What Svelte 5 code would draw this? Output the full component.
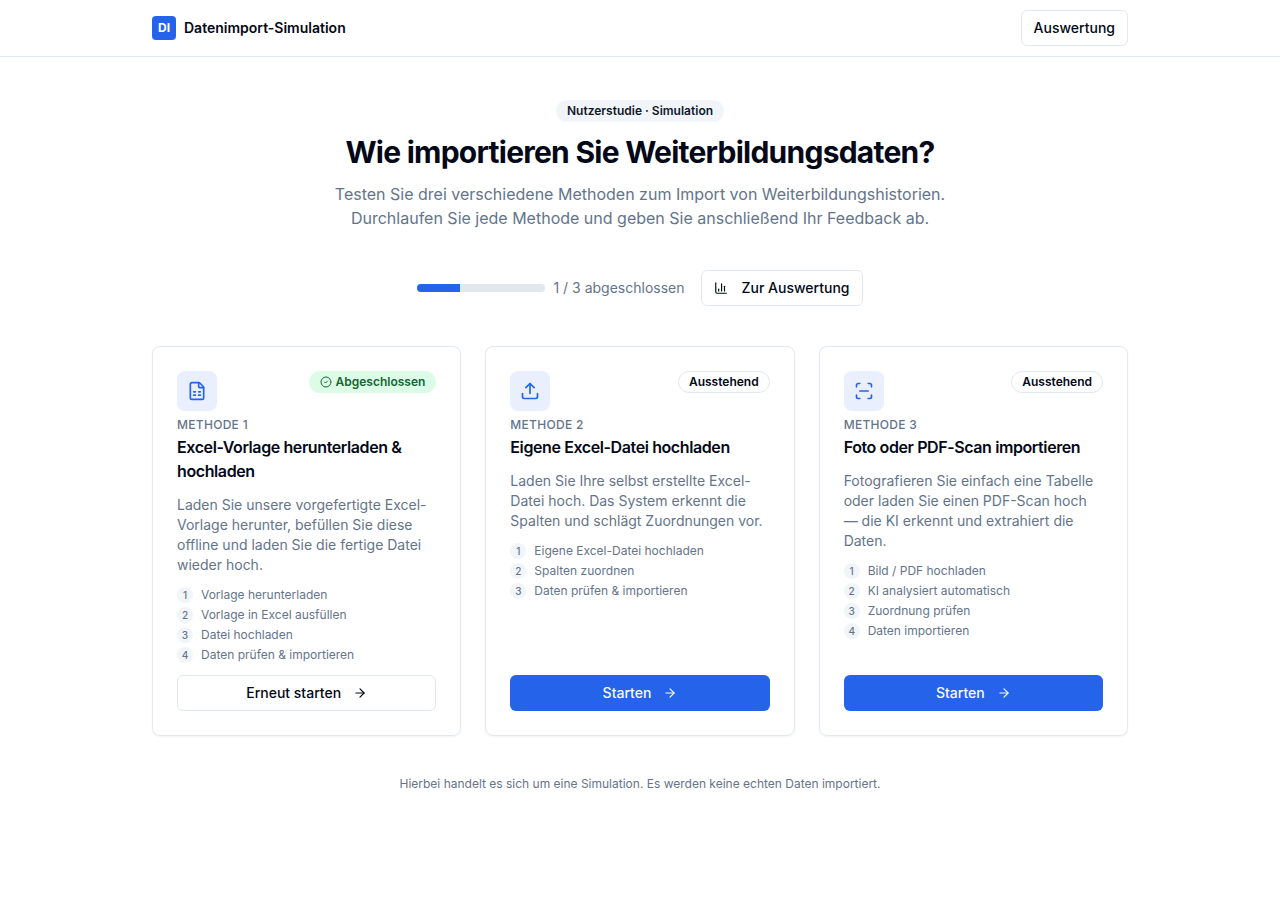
<script>
  const methods = [
    {
      id: 1,
      title: 'Excel-Vorlage herunterladen & hochladen',
      description:
        'Laden Sie unsere vorgefertigte Excel-Vorlage herunter, befüllen Sie diese offline und laden Sie die fertige Datei wieder hoch.',
      steps: ['Vorlage herunterladen', 'Vorlage in Excel ausfüllen', 'Datei hochladen', 'Daten prüfen & importieren'],
      icon: [
        'M6 22a2 2 0 0 1-2-2V4a2 2 0 0 1 2-2h8a2.4 2.4 0 0 1 1.704.706l3.588 3.588A2.4 2.4 0 0 1 20 8v12a2 2 0 0 1-2 2z',
        'M14 2v5a1 1 0 0 0 1 1h5',
        'M8 13h2',
        'M14 13h2',
        'M8 17h2',
        'M14 17h2'
      ]
    },
    {
      id: 2,
      title: 'Eigene Excel-Datei hochladen',
      description:
        'Laden Sie Ihre selbst erstellte Excel-Datei hoch. Das System erkennt die Spalten und schlägt Zuordnungen vor.',
      steps: ['Eigene Excel-Datei hochladen', 'Spalten zuordnen', 'Daten prüfen & importieren'],
      icon: ['M12 3v12', 'm17 8-5-5-5 5', 'M21 15v4a2 2 0 0 1-2 2H5a2 2 0 0 1-2-2v-4']
    },
    {
      id: 3,
      title: 'Foto oder PDF-Scan importieren',
      description:
        'Fotografieren Sie einfach eine Tabelle oder laden Sie einen PDF-Scan hoch — die KI erkennt und extrahiert die Daten.',
      steps: ['Bild / PDF hochladen', 'KI analysiert automatisch', 'Zuordnung prüfen', 'Daten importieren'],
      icon: [
        'M3 7V5a2 2 0 0 1 2-2h2',
        'M17 3h2a2 2 0 0 1 2 2v2',
        'M21 17v2a2 2 0 0 1-2 2h-2',
        'M7 21H5a2 2 0 0 1-2-2v-2',
        'M7 12h10'
      ]
    }
  ];

  const chartIcon = ['M3 3v16a2 2 0 0 0 2 2h16', 'M18 17V9', 'M13 17V5', 'M8 17v-3'];
  const arrowIcon = ['M5 12h14', 'm12 5 7 7-7 7'];
  const checkIcon = ['M22 12a10 10 0 1 1-20 0a10 10 0 1 1 20 0', 'm9 12 2 2 4-4'];

  let completed = $state([1]);
  let progress = $derived((completed.length / methods.length) * 100);
</script>

{#snippet icon(paths, size)}
  <svg
    width={size}
    height={size}
    viewBox="0 0 24 24"
    fill="none"
    stroke="currentColor"
    stroke-width="2"
    stroke-linecap="round"
    stroke-linejoin="round"
    aria-hidden="true"
  >
    {#each paths as d}
      <path {d} />
    {/each}
  </svg>
{/snippet}

<div class="page">
  <header>
    <div class="container header-inner">
      <a class="brand" href="#start">
        <span class="logo">DI</span>
        <span>Datenimport-Simulation</span>
      </a>
      <a class="btn outline" href="#auswertung">Auswertung</a>
    </div>
  </header>

  <main class="container">
    <section class="hero">
      <span class="badge secondary">Nutzerstudie · Simulation</span>
      <h1>Wie importieren Sie Weiterbildungsdaten?</h1>
      <p>
        Testen Sie drei verschiedene Methoden zum Import von Weiterbildungshistorien. Durchlaufen Sie jede Methode und
        geben Sie anschließend Ihr Feedback ab.
      </p>
    </section>

    <section class="status">
      <div class="progress">
        <div
          class="track"
          role="progressbar"
          aria-label="Fortschritt"
          aria-valuemin="0"
          aria-valuemax={methods.length}
          aria-valuenow={completed.length}
        >
          <div class="bar" style="width: {progress}%"></div>
        </div>
        <span>{completed.length} / {methods.length} abgeschlossen</span>
      </div>
      <a class="btn outline with-chart" href="#auswertung">
        {@render icon(chartIcon, 14)}
        Zur Auswertung
      </a>
    </section>

    <section class="methods">
      {#each methods as method (method.id)}
        {@const done = completed.includes(method.id)}
        <article class="card">
          <div class="card-top">
            <div class="method-icon">{@render icon(method.icon, 20)}</div>
            {#if done}
              <span class="badge done">{@render icon(checkIcon, 12)}Abgeschlossen</span>
            {:else}
              <span class="badge pending">Ausstehend</span>
            {/if}
          </div>
          <p class="eyebrow">Methode {method.id}</p>
          <h2>{method.title}</h2>
          <p class="description">{method.description}</p>
          <ol>
            {#each method.steps as step, i}
              <li><span class="num">{i + 1}</span>{step}</li>
            {/each}
          </ol>
          <button type="button" class="btn start" class:outline={done} class:primary={!done}>
            {done ? 'Erneut starten' : 'Starten'}
            {@render icon(arrowIcon, 14)}
          </button>
        </article>
      {/each}
    </section>

    <p class="note">Hierbei handelt es sich um eine Simulation. Es werden keine echten Daten importiert.</p>
  </main>
</div>

<style>
  :global(body) {
    margin: 0;
    background: #ffffff;
  }

  .page,
  .page :global(*) {
    box-sizing: border-box;
  }

  .page {
    min-height: 100vh;
    font-family: Inter, sans-serif;
    font-size: 16px;
    line-height: 24px;
    color: #020817;
    -webkit-font-smoothing: antialiased;
  }

  h1,
  h2,
  p,
  ol {
    margin: 0;
    padding: 0;
  }

  svg {
    flex-shrink: 0;
  }

  .container {
    max-width: 1024px;
    margin: 0 auto;
    padding: 0 24px;
  }

  header {
    border-bottom: 1px solid #e2e8f0;
  }

  .header-inner {
    display: flex;
    align-items: center;
    justify-content: space-between;
    height: 56px;
  }

  .brand {
    display: flex;
    align-items: center;
    gap: 8px;
    font-size: 14px;
    line-height: 20px;
    font-weight: 600;
    color: inherit;
    text-decoration: none;
  }

  .logo {
    display: flex;
    align-items: center;
    justify-content: center;
    width: 24px;
    height: 24px;
    border-radius: 4px;
    background: #2563eb;
    color: #ffffff;
    font-size: 12px;
    font-weight: 700;
  }

  .btn {
    display: inline-flex;
    align-items: center;
    justify-content: center;
    height: 36px;
    padding: 0 12px;
    border: 1px solid transparent;
    border-radius: 6px;
    font-family: inherit;
    font-size: 14px;
    line-height: 20px;
    font-weight: 500;
    text-decoration: none;
    white-space: nowrap;
    cursor: pointer;
  }

  .outline {
    background: #ffffff;
    border-color: #e2e8f0;
    color: #020817;
  }

  .primary {
    background: #2563eb;
    color: #f8fafc;
  }

  .with-chart {
    gap: 14px;
  }

  .badge {
    display: inline-flex;
    align-items: center;
    gap: 4px;
    padding: 2px 10px;
    border: 1px solid transparent;
    border-radius: 999px;
    font-size: 12px;
    line-height: 16px;
    font-weight: 600;
  }

  .secondary {
    margin-bottom: 12px;
    background: #f1f5f9;
    color: #0f172a;
  }

  .pending {
    border-color: #e2e8f0;
  }

  .done {
    background: #dcfce7;
    color: #166534;
  }

  main {
    padding-top: 40px;
    padding-bottom: 40px;
  }

  main.container {
    padding: 40px 24px;
  }

  .hero {
    text-align: center;
  }

  h1 {
    margin-bottom: 12px;
    font-size: 30px;
    line-height: 36px;
    font-weight: 700;
    letter-spacing: -0.025em;
  }

  .hero p {
    max-width: 640px;
    margin: 0 auto;
    color: #64748b;
  }

  .status {
    display: flex;
    flex-wrap: wrap;
    align-items: center;
    justify-content: center;
    gap: 16px;
    margin: 40px 0;
  }

  .progress {
    display: flex;
    align-items: center;
    gap: 8px;
    font-size: 14px;
    line-height: 20px;
    color: #64748b;
  }

  .track {
    width: 128px;
    height: 8px;
    border-radius: 999px;
    background: #e2e8f0;
    overflow: hidden;
  }

  .bar {
    height: 100%;
    background: #2563eb;
  }

  .methods {
    display: grid;
    grid-template-columns: repeat(3, minmax(0, 1fr));
    gap: 24px;
  }

  .card {
    display: flex;
    flex-direction: column;
    padding: 24px;
    border: 1px solid #e2e8f0;
    border-radius: 8px;
    box-shadow: 0 1px 2px rgba(0, 0, 0, 0.05);
  }

  .card-top {
    display: flex;
    align-items: flex-start;
    justify-content: space-between;
    margin-bottom: 6px;
  }

  .method-icon {
    display: flex;
    align-items: center;
    justify-content: center;
    width: 40px;
    height: 40px;
    border-radius: 8px;
    background: #e9effd;
    color: #2563eb;
  }

  .eyebrow {
    margin-bottom: 2px;
    font-size: 12px;
    line-height: 16px;
    font-weight: 500;
    letter-spacing: 0.025em;
    text-transform: uppercase;
    color: #64748b;
  }

  h2 {
    font-size: 16px;
    line-height: 24px;
    font-weight: 600;
    letter-spacing: -0.025em;
  }

  .description {
    margin: 12px 0;
    font-size: 14px;
    line-height: 20px;
    color: #64748b;
  }

  ol {
    display: flex;
    flex-direction: column;
    gap: 4px;
    margin-bottom: 12px;
    list-style: none;
  }

  li {
    display: flex;
    align-items: center;
    gap: 8px;
    font-size: 12px;
    line-height: 16px;
    color: #64748b;
  }

  .num {
    display: flex;
    align-items: center;
    justify-content: center;
    width: 16px;
    height: 16px;
    border-radius: 50%;
    background: #f1f5f9;
    font-size: 10px;
    font-weight: 500;
  }

  .start {
    gap: 12px;
    width: 100%;
    margin-top: auto;
  }

  .note {
    margin-top: 40px;
    text-align: center;
    font-size: 12px;
    line-height: 16px;
    color: #64748b;
  }

  @media (max-width: 768px) {
    .methods {
      grid-template-columns: 1fr;
    }
  }
</style>
